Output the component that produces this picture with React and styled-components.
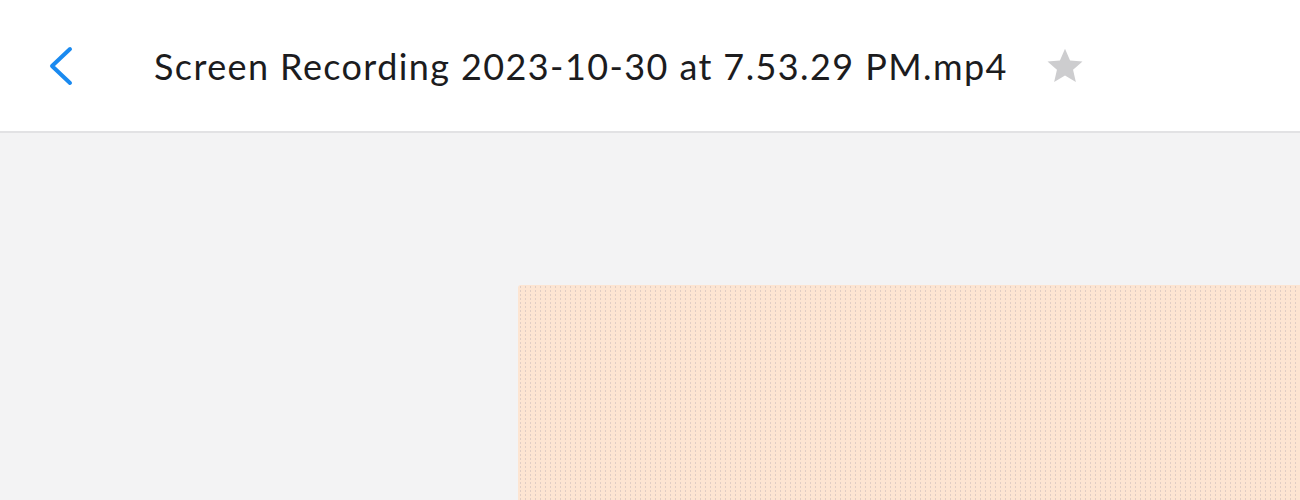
import React from "react";
import styled, { createGlobalStyle } from "styled-components";

const Global = createGlobalStyle`
  html, body { margin: 0; padding: 0; background: #f3f3f4; }
  body { font-family: "Open Sans", sans-serif; overflow: hidden; }
`;

const Page = styled.div`
  width: 1300px;
  height: 500px;
  display: flex;
  flex-direction: column;
  background: #f3f3f4;
`;

const Header = styled.header`
  height: 131px;
  flex: none;
  background: #ffffff;
  border-bottom: 2px solid #e2e2e4;
  display: flex;
  align-items: center;
  padding-left: 44px;
  box-sizing: content-box;
`;

const BackButton = styled.button`
  border: 0;
  background: none;
  padding: 0;
  width: 32px;
  height: 42px;
  display: flex;
  align-items: center;
  justify-content: center;
  cursor: pointer;
  margin-right: 78px;
`;

const Title = styled.h1`
  margin: 0;
  font-family: "Lato", sans-serif;
  font-weight: 400;
  font-size: 36px;
  color: #1c1c1e;
  letter-spacing: 1.4px;
`;

const StarButton = styled.button`
  border: 0;
  background: none;
  padding: 0;
  margin-left: 36px;
  display: flex;
  align-items: center;
`;

const Body = styled.main`
  flex: 1;
  display: flex;
  padding: 152px 0 0 518px;
`;

const Preview = styled.div`
  flex: 1;
  background-color: #fde5d2;
  background-image: radial-gradient(rgba(180, 170, 175, 0.45) 0.6px, transparent 0.8px);
  background-size: 5px 4px;
  border-top-left-radius: 3px;
`;

export default function App() {
  return (
    <>
      <Global />
      <Page>
        <Header>
          <BackButton aria-label="Back">
            <svg width="28" height="42" viewBox="0 0 28 42">
              <path d="M24 4 L6 21 L24 38" fill="none" stroke="#1a8af0" strokeWidth="4" strokeLinecap="round" strokeLinejoin="round" />
            </svg>
          </BackButton>
          <Title>Screen Recording 2023-10-30 at 7.53.29 PM.mp4</Title>
          <StarButton aria-label="Favorite">
            <svg width="42" height="42" viewBox="0 0 24 24">
              <path d="M12 2.2l2.9 6.6 7.1.6-5.4 4.7 1.6 7-6.2-3.7-6.2 3.7 1.6-7L2 9.4l7.1-.6z" fill="#cdcdcf" />
            </svg>
          </StarButton>
        </Header>
        <Body>
          <Preview />
        </Body>
      </Page>
    </>
  );
}
